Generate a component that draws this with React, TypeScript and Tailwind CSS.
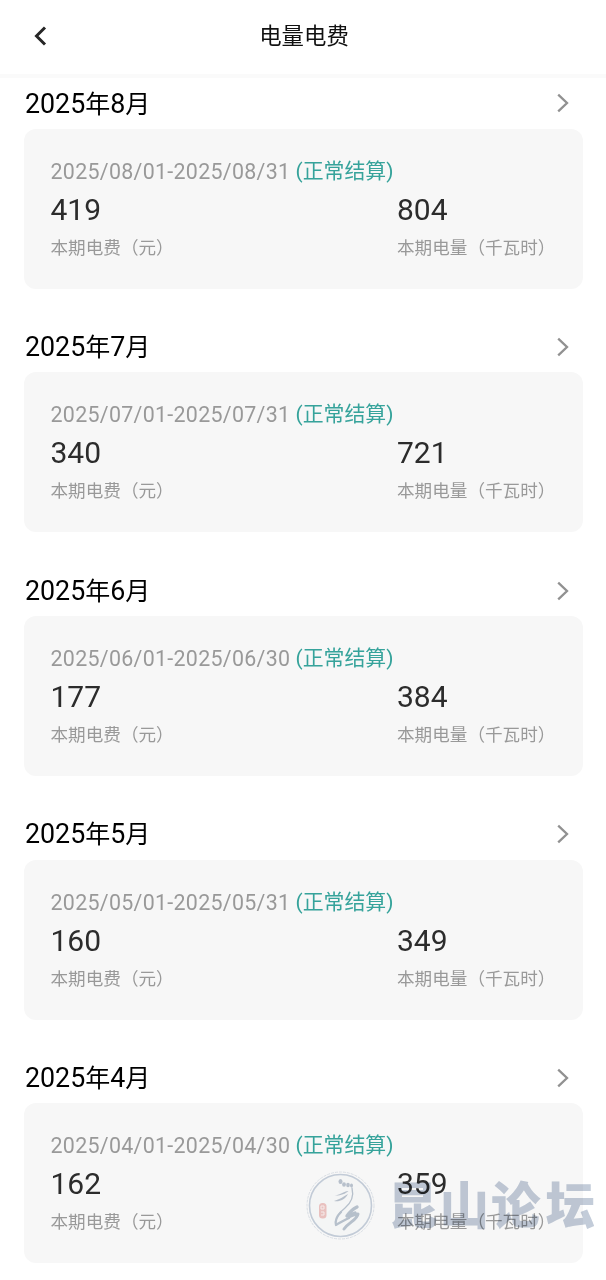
const periods = [
  { month: 8, range: "2025/08/01-2025/08/31", fee: 419, usage: 804 },
  { month: 7, range: "2025/07/01-2025/07/31", fee: 340, usage: 721 },
  { month: 6, range: "2025/06/01-2025/06/30", fee: 177, usage: 384 },
  { month: 5, range: "2025/05/01-2025/05/31", fee: 160, usage: 349 },
  { month: 4, range: "2025/04/01-2025/04/30", fee: 162, usage: 359 },
];

type Period = (typeof periods)[number];

function Header() {
  return (
    <header className="flex h-[78px] items-center border-b-4 border-[#fafafa] px-[33px] pb-[2px]">
      <svg className="h-5 w-4" viewBox="0 0 16 20" fill="none" stroke="#262626" strokeWidth="3">
        <path d="M12 1.5 3.5 10l8.500 8.500" />
      </svg>
      <h1 className="mr-[14px] flex-1 text-center text-[22.4px] leading-8 text-[#111]">电量电费</h1>
    </header>
  );
}

function Metric({ value, label }: { value: number; label: string }) {
  return (
    <div>
      <div className="h-[42px] text-[30px] leading-[42px] text-[#2c2c2c]">{value}</div>
      <div className="mt-[4px] text-[17.6px] leading-[26px] whitespace-nowrap text-[#999]">{label}</div>
    </div>
  );
}

function PeriodSection({ period }: { period: Period }) {
  return (
    <section className="h-[243.6px]">
      <div className="flex h-[50.800px] items-center justify-between pr-[14px] pl-[1px]">
        <h2 className="pt-[1.500px] text-[25px] leading-9 text-black">
          <span className="text-[26.8px]">2025</span>年<span className="text-[26.8px]">{period.month}</span>月
        </h2>
        <svg className="h-5 w-3" viewBox="0 0 12 20" fill="none" stroke="#919191" strokeWidth="2.3">
          <path d="M1.200 1.700 10 10l-8.800 8.300" />
        </svg>
      </div>
      <div className="h-[160px] rounded-[12px] bg-[#f7f7f7] pt-[26.500px] pl-[26.500px]">
        <div className="mb-[1.500px] flex h-[32px] items-center text-[20.900px] leading-[31px] whitespace-nowrap">
          <span className="w-[245px] text-[21.400px] tracking-[0.3px] text-[#999]">{period.range}</span>
          <span className="text-[#36a39b]">(正常结算)</span>
        </div>
        <div className="grid grid-cols-[346.500px_1fr]">
          <Metric value={period.fee} label="本期电费（元）" />
          <Metric value={period.usage} label="本期电量（千瓦时）" />
        </div>
      </div>
    </section>
  );
}

function Watermark() {
  return (
    <div className="pointer-events-none absolute top-[1171px] left-[306px] flex h-[70px] items-center mix-blend-multiply">
      <svg className="h-[70px] w-[70px]" viewBox="0 0 70 70" fill="none">
        <circle cx="34.500" cy="34.500" r="33.500" stroke="#e0e5eb" strokeWidth="1" strokeDasharray="3 1" />
        <circle cx="34.500" cy="34.500" r="31" fill="#fcfdfd" stroke="#c9d2de" strokeWidth="1.600" />
        <g fill="#bdc6d2">
          <ellipse cx="34.500" cy="10.500" rx="2" ry="2.600" />
          <ellipse cx="38" cy="13.500" rx="1.900" ry="2.200" />
          <ellipse cx="42" cy="14" rx="1.800" ry="2.200" />
          <ellipse cx="45.500" cy="14.500" rx="1.500" ry="2" />
          <path d="M28.500 24.500c5 0 8-4 14-4.500-3 3-9 5-14 4.500Z" />
          <path d="M28 30c5 1 11-1 14-7-5 3-8 5-14 7Z" />
        </g>
        <g strokeLinecap="round" strokeLinejoin="round" stroke="#bcc6d2">
          <path d="M46 17c2 8-1 15-7 20-5 4-8 7-9 13" strokeWidth="1.300" />
          <path d="M35 41c-4 4-6 9-5 13 4-2 8-5 13-7" strokeWidth="2.300" />
          <path d="M51 36c-4 2-8 6-10 9 3-1 5-2 8-3" strokeWidth="3.400" />
          <path d="M43 46c2-1 6-3 9-3-1 6-9 8-14 15" strokeWidth="3" />
        </g>
        <rect x="13" y="32" width="7.500" height="15.500" rx="3.500" fill="#f1c7c5" />
        <path d="M15 35h3v3h-3zM15 41h3v3h-3" stroke="#fdf4f3" strokeWidth="1" />
      </svg>
      <div className="-mt-[6px] ml-[12px] flex gap-[2px] font-['Noto_Sans_CJK_SC',sans-serif] text-[49.500px] leading-[70px] font-black whitespace-nowrap text-[#c3ccd9]">
        <span>昆</span>
        <span>山</span>
        <span>论</span>
        <span className="ml-[3px]">坛</span>
      </div>
    </div>
  );
}

export default function App() {
  return (
    <div className="relative h-[1280px] w-[606px] overflow-hidden bg-white font-[Roboto,'Noto_Sans_CJK_SC',sans-serif]">
      <Header />
      <main className="pr-[23px] pl-[24px]">
        {periods.map((period) => (
          <PeriodSection key={period.month} period={period} />
        ))}
      </main>
      <Watermark />
    </div>
  );
}
